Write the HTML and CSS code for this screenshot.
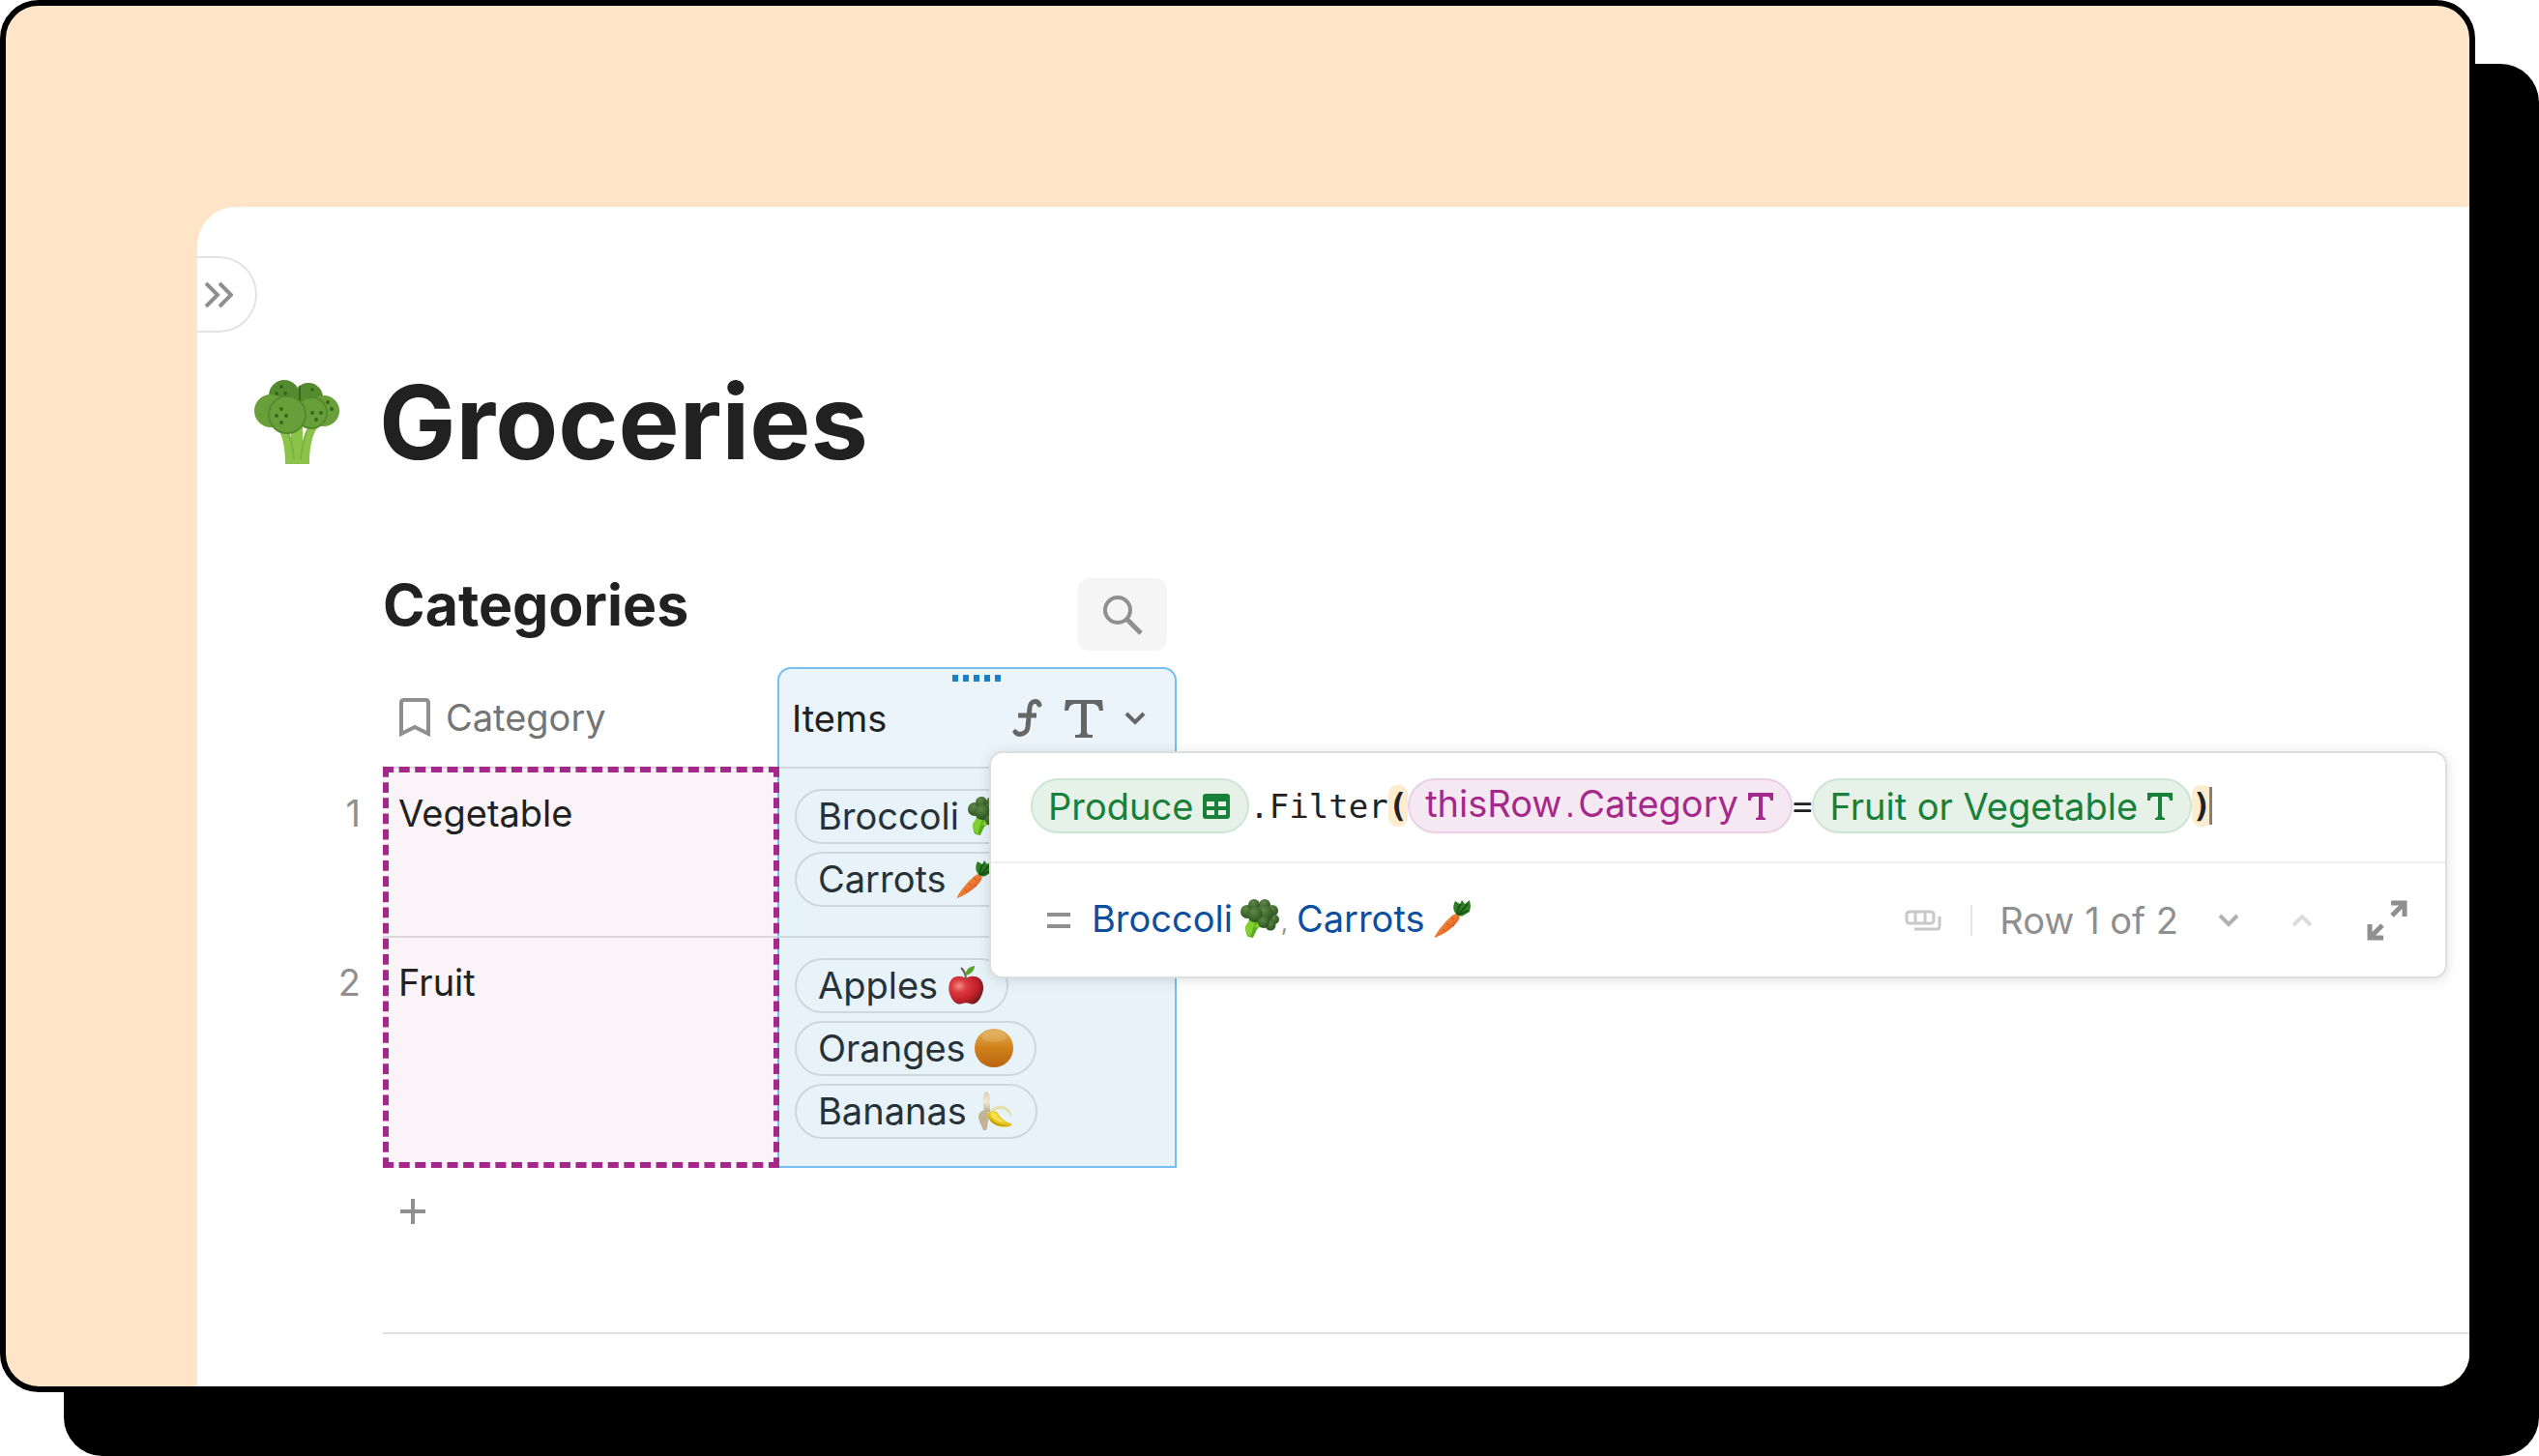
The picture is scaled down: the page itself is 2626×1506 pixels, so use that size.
FILE: index.html
```html
<!DOCTYPE html>
<html lang="en">
<head>
<meta charset="utf-8">
<title>Groceries</title>
<meta name="viewport" content="width=device-width, initial-scale=1">
<link rel="stylesheet" href="styles.css">
</head>
<body>
<svg class="sprite" aria-hidden="true">
  <defs>
    <linearGradient id="g-orange" x1="0" y1="0" x2="0" y2="1"><stop offset="0" stop-color="#e0ae5c"/><stop offset=".25" stop-color="#d9983a"/><stop offset=".5" stop-color="#d08019"/><stop offset="1" stop-color="#b96512"/></linearGradient>
    <radialGradient id="g-apple" cx=".3" cy=".35" r=".75"><stop offset="0" stop-color="#f2908c"/><stop offset=".3" stop-color="#dd3a40"/><stop offset=".7" stop-color="#c0202c"/><stop offset="1" stop-color="#6d1a1c"/></radialGradient>
    <linearGradient id="g-carrot" x1="0" y1="0" x2="1" y2="1"><stop offset=".3" stop-color="#f58f45"/><stop offset=".7" stop-color="#e0601f"/></linearGradient>
    <radialGradient id="g-floret" cx=".4" cy=".3" r=".7"><stop offset="0" stop-color="#5f8a45"/><stop offset="1" stop-color="#2d5321"/></radialGradient>
    <linearGradient id="g-peel" x1="0" y1="0" x2="0" y2="1"><stop offset="0" stop-color="#ddd0b4"/><stop offset=".5" stop-color="#f0e8d2"/><stop offset="1" stop-color="#b5a58a"/></linearGradient>
  </defs>
  <symbol id="broccoli" viewBox="0 0 40 40">
    <path d="M8 39c-2-2-3-5-2-9l3-9 13 1-4 7c-2 5-4 8-5 11z" fill="#5cab20"/>
    <path d="M5 28l5-7 5 3-5 15c-2-1-6-6-5-11zM14 28l6-5 4 2-6 6z" fill="#80d031"/>
    <g fill="url(#g-floret)"><circle cx="7" cy="13" r="7"/><circle cx="14" cy="6" r="6"/><circle cx="25" cy="6" r="6"/><circle cx="33" cy="12" r="6"/><circle cx="35" cy="21" r="5"/><circle cx="31" cy="27" r="5.500"/><circle cx="25" cy="15" r="9"/><circle cx="15" cy="16" r="8"/><circle cx="24" cy="24" r="6"/></g>
  </symbol>
  <symbol id="carrot" viewBox="0 0 40 40">
    <path d="M20 17c4-4 9-1 7 4-4 7-13 14-25 19-1-2 10-17 18-23z" fill="url(#g-carrot)"/>
    <path d="M14 25l3 2M19 19l3 2M10 31l2 2M20 27l2 1" stroke="#c14d12" stroke-width="1" fill="none"/>
    <path d="M25 16c-4-3-5-8-2-14l5 3 2-4 3 4 5-4 1 6-1 6-5 3c-3 2-5 2-8 0z" fill="#2f7d24"/>
    <path d="M25 16c1-5 1-8 4-11M26 16l10-11M27 16l9-4" stroke="#174f15" stroke-width="1.500" fill="none"/>
  </symbol>
  <symbol id="apple" viewBox="0 0 40 40">
    <path d="M20 13c4-3 10-3 14 0 5 4 5 12 2 18-3 7-8 10-12 8-3-1-5-1-8 0-4 2-9-1-12-8-3-6-2-14 2-18 4-3 10-3 14 0z" fill="url(#g-apple)"/>
    <path d="M20 14c0-5-1-8-5-12" stroke="#6b5a4d" stroke-width="2" fill="none"/>
    <path d="M19 10c1-6 4-9 10-10 0 5-4 9-10 10z" fill="#58a32a"/>
  </symbol>
  <symbol id="orange" viewBox="0 0 40 40"><circle cx="20" cy="20" r="20" fill="url(#g-orange)"/><ellipse cx="20" cy="8" rx="13" ry="6" fill="#f5dcae" opacity=".2"/></symbol>
  <symbol id="banana" viewBox="0 0 40 40">
    <path d="M10 0c3 0 5 3 5 8v14l-6-2c-2-7-2-16 1-20z" fill="url(#g-peel)"/>
    <path d="M11 19c-5 0-8 3-8 8 1 5 3 8 5 13 2 1 4 0 4-3l2-13z" fill="#c2b296"/>
    <path d="M15 19c6-5 14-6 19-1 3 3 4 6 3 9-3-5-6-9-11-9-4 0-7 1-9 4z" fill="#e6dfae"/>
    <path d="M12 24c2-3 6-5 10-3 3 5 8 11 15 12 1 1 0 2-1 3-9 2-21 0-24-12z" fill="#e3c51d"/>
    <path d="M13 25c4 7 12 10 22 10-9 2-19 0-22-10z" fill="#b8970f"/>
    <path d="M15 23c2-2 4-2 6-1 3 5 6 8 10 10-7 0-14-3-16-9z" fill="#f6e04e"/>
  </symbol>
  <symbol id="text-type" viewBox="0 0 40 40"><path d="M1 1h38l1 11h-4c-1-5-3-7-8-7h-5v28c0 3 1 4 4 4h2v3H11v-3h2c3 0 4-1 4-4V5h-5c-5 0-7 2-8 7H0z" fill="currentColor"/></symbol>
  <symbol id="text-type-small" viewBox="0 0 26 28"><path d="M0 0h26v8h-3c0-3-1-4-4-4h-4v18c0 3 1 4 3 4v2H8v-2c2 0 3-1 3-4V4H7C4 4 3 5 3 8H0z" fill="currentColor"/></symbol>
  <symbol id="chevron" viewBox="0 0 22 14"><path d="M2 2l9 9 9-9" fill="none" stroke="currentColor" stroke-width="4"/></symbol>
</svg>

<div class="frame">
  <main class="doc">
    <button class="toggle" type="button" aria-label="Show pages">
      <svg width="30" height="28" viewBox="0 0 30 28" fill="none" stroke="currentColor" stroke-width="4"><path d="M2 2l12 12L2 26M16 2l12 12-12 12"/></svg>
    </button>

    <header class="title">
      <svg class="title-icon" viewBox="0 0 88 88" aria-hidden="true">
        <path d="M38 48h12v39H38z" fill="#8bc34a"/>
        <path d="M23 48c7 10 9 24 9 39h9c0-15-2-28-8-39zM66 48c-7 10-9 24-9 39h-9c0-15 2-28 8-39z" fill="#8bc34a"/>
        <path d="M34 52c4 9 6 18 7 30M55 52c-4 9-6 18-7 30" fill="none" stroke="#7cb342" stroke-width="2"/>
        <circle cx="31" cy="16" r="16" fill="#558b2f"/><circle cx="56" cy="18" r="15" fill="#558b2f"/>
        <path d="M47 6v26" stroke="#33691e" stroke-width="2"/>
        <circle cx="17" cy="32" r="17" fill="#689f38"/><circle cx="72" cy="32" r="16" fill="#689f38"/>
        <circle cx="59" cy="34" r="16" fill="#689f38" stroke="#558b2f" stroke-width="2"/>
        <circle cx="34" cy="36" r="19" fill="#689f38" stroke="#558b2f" stroke-width="2"/>
        <g fill="#33691e"><circle cx="28" cy="7" r="2"/><circle cx="23" cy="14" r="2"/><circle cx="32" cy="14" r="2"/><circle cx="60" cy="10" r="2"/><circle cx="28" cy="30" r="2"/><circle cx="23" cy="37" r="2"/><circle cx="33" cy="37" r="2"/><circle cx="28" cy="44" r="2"/><circle cx="60" cy="34" r="2"/><circle cx="69" cy="34" r="2"/><circle cx="64" cy="41" r="2"/><circle cx="76" cy="23" r="2"/><circle cx="80" cy="30" r="2"/></g>
      </svg>
      <h1>Groceries</h1>
    </header>

    <section class="content">
      <div class="table-bar">
        <h2>Categories</h2>
        <button class="search" type="button" aria-label="Search">
          <svg width="42" height="42" viewBox="0 0 42 42" fill="none" stroke="currentColor" stroke-width="4"><circle cx="16" cy="16" r="13"/><path d="M25 25l15 15" stroke-width="5"/></svg>
        </button>
      </div>

      <div class="table-wrap">
        <table>
          <colgroup><col class="c-num"><col class="c-cat"><col class="c-items"></colgroup>
          <thead>
            <tr>
              <td></td>
              <th scope="col"><span class="head"><svg width="32" height="40" viewBox="0 0 32 40" fill="none" stroke="currentColor" stroke-width="4"><path d="M2 37V5q0-3 3-3h22q3 0 3 3v32l-14-7z"/></svg>Category</span></th>
              <th scope="col" class="items">
                <i class="grip"></i>
                <span class="head">Items
                  <span class="tools">
                    <svg width="32" height="40" viewBox="0 0 32 40" fill="none" stroke="currentColor" stroke-width="5" stroke-linecap="round"><path d="M28 6c-2-5-9-5-10 3l-2 20c-1 8-10 9-13 5"/><path d="M6 17h19" stroke-linecap="butt"/></svg>
                    <svg width="40" height="40"><use href="#text-type"/></svg>
                    <svg width="22" height="14"><use href="#chevron"/></svg>
                  </span>
                </span>
              </th>
            </tr>
          </thead>
          <tbody>
            <tr>
              <td class="num">1</td>
              <td class="cat">Vegetable</td>
              <td class="items"><div class="chips"><span class="chip">Broccoli<svg><use href="#broccoli"/></svg></span><span class="chip">Carrots<svg><use href="#carrot"/></svg></span></div></td>
            </tr>
            <tr>
              <td class="num">2</td>
              <td class="cat">Fruit</td>
              <td class="items"><div class="chips"><span class="chip">Apples<svg><use href="#apple"/></svg></span><span class="chip">Oranges<svg><use href="#orange"/></svg></span><span class="chip">Bananas<svg><use href="#banana"/></svg></span></div></td>
            </tr>
          </tbody>
        </table>
        <svg class="marquee" aria-hidden="true">
          <line x1="0" y1="0" x2="100%" y2="0" pathLength="74"/>
          <line x1="0" y1="100%" x2="100%" y2="100%" pathLength="74"/>
          <line x1="0" y1="0" x2="0" y2="100%" pathLength="77"/>
          <line x1="100%" y1="0" x2="100%" y2="100%" pathLength="77"/>
        </svg>
      </div>

      <button class="add" type="button" aria-label="Add row">
        <svg width="28" height="28" viewBox="0 0 28 28" stroke="currentColor" stroke-width="4"><path d="M14 1v26M1 14h26"/></svg>
      </button>
      <hr>
    </section>

    <div class="popup">
      <div class="formula">
        <span class="ref green">Produce<svg width="28" height="26" viewBox="0 0 28 26"><path d="M3 0h22q3 0 3 3v20q0 3-3 3H3q-3 0-3-3V3q0-3 3-3zm1 8v5h8V8zm12 0v5h8V8zM4 17v5h8v-5zm12 0v5h8v-5z" fill="currentColor" fill-rule="evenodd"/></svg></span><code>.Filter</code><code class="paren">(</code><span class="ref pink"><span>thisRow<code class="dot">.</code>Category</span><svg width="26" height="28"><use href="#text-type-small"/></svg></span><code>=</code><span class="ref green">Fruit or Vegetable<svg width="26" height="28"><use href="#text-type-small"/></svg></span><code class="paren">)</code><i class="caret"></i>
      </div>
      <div class="result">
        <svg class="equals" width="24" height="16" viewBox="0 0 24 16" stroke="currentColor" stroke-width="4"><path d="M0 2h24M0 14h24"/></svg>
        <p class="values"><a href="#">Broccoli<svg><use href="#broccoli"/></svg></a><span class="comma">,</span><a href="#">Carrots<svg><use href="#carrot"/></svg></a></p>
        <svg class="cards" width="38" height="22" viewBox="0 0 38 22" fill="none" stroke="currentColor" stroke-width="3"><rect x="2" y="2" width="28" height="12" rx="3"/><path d="M11 2v12M21 2v12M36 7v10q0 3-3 3H10"/></svg>
        <span class="rule"></span>
        <span class="count">Row 1 of 2</span>
        <button class="next" type="button" aria-label="Next row"><svg width="22" height="14"><use href="#chevron"/></svg></button>
        <button class="prev" type="button" aria-label="Previous row" disabled><svg width="22" height="14"><use href="#chevron"/></svg></button>
        <button class="expand" type="button" aria-label="Expand"><svg width="42" height="42" viewBox="0 0 42 42" fill="none" stroke="currentColor" stroke-width="5"><path d="M25 3h14v14M39 3L26 16M17 39H3V25M3 39l13-13"/></svg></button>
      </div>
    </div>
  </main>
</div>
</body>
</html>
```
FILE: styles.css
```css
* { box-sizing: border-box; }
body {
  margin: 0;
  background: #fff;
  color: #212121;
  font: 400 38px/50px Inter, "Liberation Sans", sans-serif;
}
svg { display: block; flex: none; }
.sprite { position: absolute; width: 0; height: 0; }
h1, h2, p { margin: 0; }
button { padding: 0; border: 0; background: none; color: #8f8f8f; font: inherit; display: grid; place-items: center; }
code { font: 400 34px/50px "DejaVu Sans Mono", monospace; }

.frame {
  display: flex;
  min-height: calc(100vh - 66px);
  margin: 0 66px 66px 0;
  padding: 208px 0 0 198px;
  overflow: hidden;
  border: 6px solid #000;
  border-radius: 40px;
  background: #ffe5c8;
  box-shadow: 66px 66px 0 #000;
}
.doc {
  position: relative;
  flex: 1;
  padding-top: 51px;
  background: #fff;
  border-top-left-radius: 40px;
}
.toggle {
  width: 62px;
  height: 79px;
  padding-right: 16px;
  border: 2px solid #e3e3e3;
  border-left: 0;
  border-radius: 0 40px 40px 0;
}
.title { display: flex; align-items: center; gap: 40px; margin: 33px 0 93px 58px; }
.title-icon { width: 90px; height: 88px; }
h1 { font-size: 106px; line-height: 120px; font-weight: 700; }

.content { margin-left: 192px; }
.table-bar { display: flex; justify-content: space-between; width: 811px; height: 83px; margin-bottom: 17px; }
h2 { font-size: 59px; line-height: 72px; font-weight: 700; }
.search { width: 92px; height: 75px; margin-top: 8px; border-radius: 12px; background: #f5f5f5; }

.table-wrap { position: relative; width: 881px; margin-left: -60px; }
table { width: 100%; table-layout: fixed; border-spacing: 0; }
.c-num { width: 60px; }
.c-cat { width: 408px; }
td, th { padding: 0; text-align: left; vertical-align: top; font-weight: 400; }
thead th { height: 103px; vertical-align: middle; }
.head { display: flex; align-items: center; gap: 16px; padding-left: 17px; color: #757575; }
.head svg { color: #8f8f8f; }
.items .head { padding: 0 30px 0 13px; color: #212121; justify-content: space-between; }
.tools { display: flex; align-items: center; gap: 22px; }
.tools svg { color: #666; }
.items { position: relative; background: #e7f2f9; border: 0 solid #76beef; border-width: 0 2px; }
th.items { background: #ebf4fb; border-top-width: 2px; border-radius: 14px 14px 0 0; }
.grip {
  position: absolute;
  top: 6px;
  left: 179px;
  width: 51px;
  height: 7px;
  background: repeating-linear-gradient(90deg, #1a80c4 0 6px, transparent 6px 11px);
}
tbody .cat, tbody .items { padding-top: 21px; border-top: 2px solid #cfd9df; }
tbody .cat { padding-left: 16px; background: #faf4f9; border-color: #dcd6da; }
tbody tr:last-child .items { border-bottom: 2px solid #76beef; }
.num { padding: 23px 23px 0 0; text-align: right; color: #8f8f8f; }
.chips { display: flex; flex-direction: column; align-items: flex-start; gap: 8px; padding: 0 0 30px 16px; }
tr:last-child .chips { padding-bottom: 28px; }
.chip {
  display: flex;
  align-items: center;
  gap: 9px;
  height: 57px;
  padding: 0 22px 2px;
  border: 2px solid #ccd7de;
  border-radius: 29px;
  color: #263238;
}
.chip svg, .values svg { width: 40px; height: 40px; }
.marquee {
  position: absolute;
  left: 60px;
  top: 103px;
  width: 410px;
  height: calc(100% - 103px);
  overflow: hidden;
}
.marquee line { stroke: #a32889; stroke-width: 12px; stroke-dasharray: 2 1; }
.add { width: 62px; height: 60px; margin-top: 15px; }
hr { height: 2px; margin: 95px 0 40px; border: 0; background: #e0e0e0; }

.popup {
  position: absolute;
  top: 563px;
  left: 819px;
  right: 23px;
  border: 2px solid #dedede;
  border-radius: 14px;
  background: #fff;
  box-shadow: 0 2px 14px rgba(0, 0, 0, .12);
}
.formula { display: flex; align-items: center; height: 114px; padding: 0 0 3px 41px; border-bottom: 2px solid #eee; }
.ref { display: flex; align-items: center; gap: 10px; height: 57px; padding: 0 18px 0 16px; border: 2px solid; border-radius: 29px; }
.dot { font-size: 28px; }
.green { color: #188038; background: #e6f1e8; border-color: #cde5d4; }
.pink { color: #a5298a; background: #f5e8f3; border-color: #ebcfe7; }
.paren { height: 43px; line-height: 43px; border-radius: 9px; background: #fdecce; font-weight: 700; }
.caret { width: 3px; height: 39px; margin-left: -3px; background: #8a7f6c; }
.result { display: flex; align-items: center; height: 117px; padding: 0 39px 0 58px; color: #8f8f8f; }
.values { display: flex; flex: 1; margin-left: 22px; padding-bottom: 3px; }
.values a { display: flex; align-items: center; gap: 8px; color: #0b4f9e; text-decoration: none; }
.comma { width: 18px; padding: 9px 0 0 2px; font-size: 24px; }
.cards { color: #c8c8c8; }
.rule { width: 2px; height: 32px; margin: 0 28px 0 30px; background: #e6e6e6; }
.next { margin-left: 41px; color: #b0b0b0; }
.prev { margin: 0 56px 0 54px; color: #dcdcdc; transform: rotate(180deg); }
```
